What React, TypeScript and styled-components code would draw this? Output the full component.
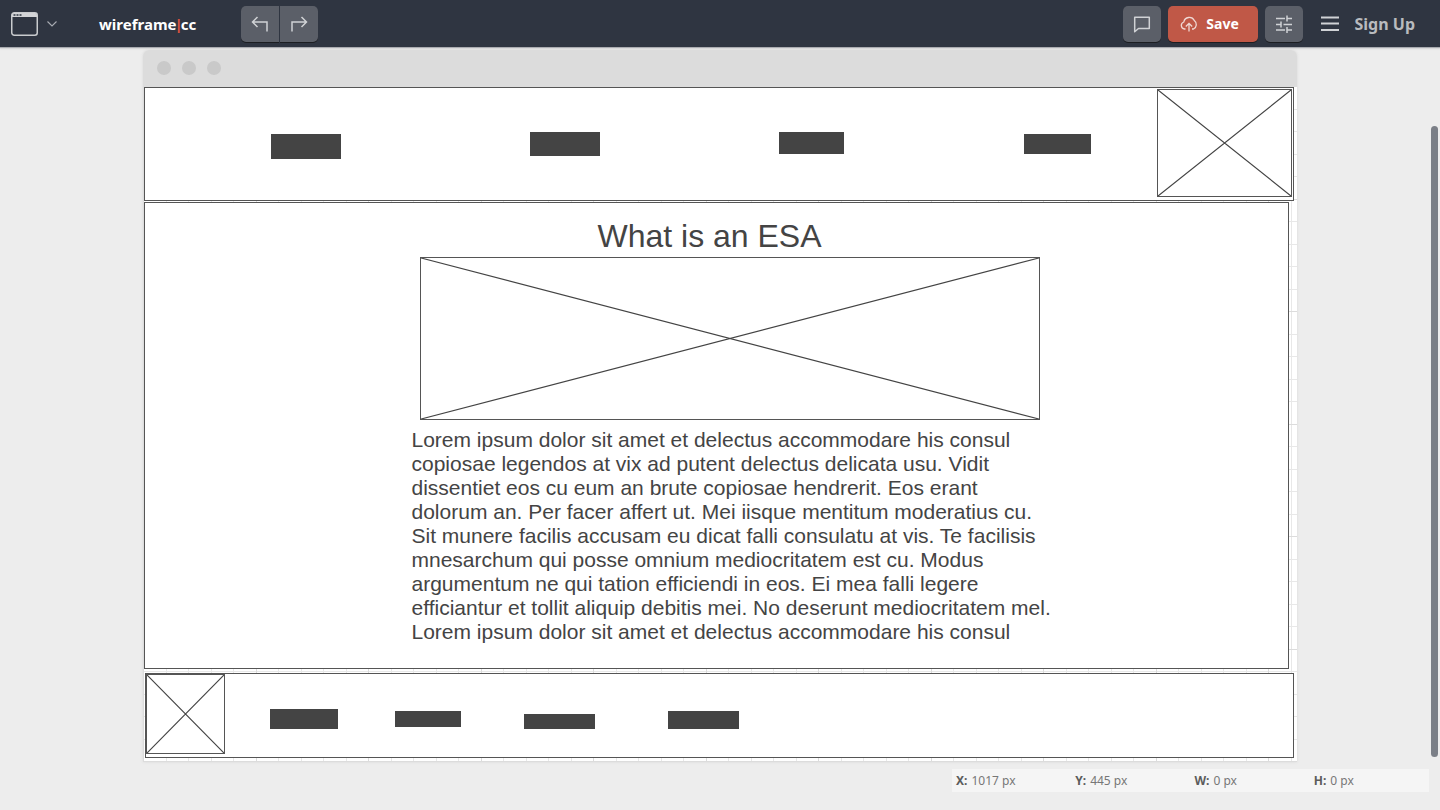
import React from "react";
import styled, { createGlobalStyle } from "styled-components";

const INK = "#444444";
const UI_FONT = '"Noto Sans", "Open Sans", sans-serif';
const DOC_FONT = '"Liberation Sans", Arial, sans-serif';

const GlobalStyle = createGlobalStyle`
  *, *::before, *::after { box-sizing: border-box; }
  body { margin: 0; background: #ededed; font-family: ${UI_FONT}; }
  h1, p { margin: 0; font-weight: 400; }
  button { padding: 0; border: 0; background: none; font: inherit; color: inherit; cursor: pointer; }
  svg { display: block; }
`;

const Page = styled.div`
  display: flex;
  flex-direction: column;
  min-height: 100vh;
`;

const TopBar = styled.header`
  display: flex;
  align-items: center;
  justify-content: space-between;
  height: 47px;
  padding: 0 25px 0 10px;
  background: #2f3541;
  box-shadow: 0 1px 1px #a9abb0, 0 2px 2px #dddddd;
`;

const BarGroup = styled.div`
  display: flex;
  align-items: center;
`;

const DeviceButton = styled.button`
  display: flex;
  align-items: center;
  gap: 8px;
  margin-right: 42px;
`;

const Logo = styled.a`
  margin-right: 45px;
  color: #ffffff;
  font-size: 15px;
  line-height: 24px;
  font-weight: 700;
  text-decoration: none;
`;

const LogoMark = styled.span`
  margin: 0 -2px;
  color: #e0543e;
`;

const History = styled.div`
  display: flex;
  gap: 1px;
`;

const ToolButton = styled.button<{ $side?: "left" | "right" }>`
  display: flex;
  align-items: center;
  justify-content: center;
  width: 38px;
  height: 36px;
  border-radius: ${(p) => (p.$side === "left" ? "5px 0 0 5px" : p.$side === "right" ? "0 5px 5px 0" : "5px")};
  background: #5b5f68;
  box-shadow: 0 1px 0 #1c1e22;
`;

const SaveButton = styled(ToolButton)`
  width: 90px;
  gap: 8px;
  margin: 0 7px;
  padding-right: 6px;
  background: #c05847;
  color: #ffffff;
  font-size: 14px;
  font-weight: 700;
`;

const MenuButton = styled.button`
  margin: 0 16px 0 18px;
`;

const SignUp = styled.a`
  color: #b9bbbe;
  font-size: 16px;
  line-height: 24px;
  font-weight: 700;
  text-decoration: none;
`;

const Workspace = styled.main`
  display: flex;
  flex: 1;
`;

const Stage = styled.div`
  flex: 1;
  min-width: 0;
`;

const Artboard = styled.section`
  margin: 3px 134px 0 143px;
  border-radius: 6px 6px 0 0;
  box-shadow: 0 0 3px #d8d8d8;
`;

const Chrome = styled.div`
  display: flex;
  align-items: center;
  gap: 11px;
  height: 37px;
  padding: 0 14px 1px;
  border-radius: 6px 6px 0 0;
  background: #dcdcdc;
`;

const Dot = styled.span`
  width: 14px;
  height: 14px;
  border-radius: 50%;
  background: #c9c9c9;
`;

const line = (dir: string, at: number, size: number, color: string) =>
  `linear-gradient(${dir}, transparent ${at}px, ${color} ${at}px, ${color} ${at + 1}px, transparent ${at + 1}px) 1px 0 / ${size}px ${size}px`;

const Grid = styled.div`
  padding: 0 3px 4px 1px;
  background:
    ${line("to right", 112, 225, "#dcdcdc")},
    ${line("to right", 224, 225, "#dcdcdc")},
    ${line("to bottom", 112, 225, "#dcdcdc")},
    ${line("to bottom", 224, 225, "#dcdcdc")},
    ${line("to right", 22, 45, "#e8e8e8")},
    ${line("to right", 44, 45, "#e8e8e8")},
    ${line("to bottom", 22, 45, "#e8e8e8")},
    ${line("to bottom", 44, 45, "#e8e8e8")},
    #ffffff;
`;

const Panel = styled.div`
  display: flex;
  border: 1px solid #555555;
  background: #ffffff;
`;

const NavPanel = styled(Panel)`
  height: 114px;
  justify-content: space-between;
  padding: 1px;
`;

const ContentPanel = styled(Panel)`
  flex-direction: column;
  align-items: center;
  height: 467px;
  margin: 1px 5px 4px 0;
  padding: 13px 0 0 26px;
`;

const FooterPanel = styled(Panel)`
  height: 85px;
  margin-left: 1px;
`;

const Blocks = styled.div`
  display: flex;
`;

const Block = styled.span<{ $w: number; $h: number; $before: number; $top: number }>`
  width: ${(p) => p.$w}px;
  height: ${(p) => p.$h}px;
  margin: ${(p) => p.$top}px 0 0 ${(p) => p.$before}px;
  background: ${INK};
`;

const Frame = styled.div<{ $w: number; $h: number }>`
  width: ${(p) => p.$w}px;
  height: ${(p) => p.$h}px;
  border: 1px solid #555555;
  svg { width: 100%; height: 100%; }
`;

const Article = styled.article`
  display: flex;
  flex-direction: column;
  width: 636px;
  color: ${INK};
  font-family: ${DOC_FONT};
`;

const Title = styled.h1`
  padding: 0 40px 1px 0;
  text-align: center;
  font-size: 32px;
  line-height: 40px;
`;

const Picture = styled.div`
  margin: 0 8px 8px;
`;

const Copy = styled.p`
  font-size: 21px;
  line-height: 24px;
  white-space: nowrap;
`;

const CopyLine = styled.span`
  display: block;
`;

const Status = styled.dl`
  display: grid;
  grid-template-columns: repeat(4, 1fr);
  width: 477px;
  height: 23px;
  margin: 7px 2px 0 auto;
  background: #f5f5f5;
  color: #777777;
  font-size: 12px;
  line-height: 23px;
`;

const Reading = styled.div`
  display: flex;
  gap: 4px;
  padding-left: 4px;
  dt { color: #5c5c5c; font-weight: 700; }
  dd { margin: 0; }
`;

const Rail = styled.div`
  width: 9px;
  padding-top: 79px;
`;

const Thumb = styled.div`
  width: 7px;
  height: 631px;
  border-radius: 4px;
  background: #7b7f87;
`;

type BlockSpec = { w: number; h: number; before: number; top: number };

const navBlocks: BlockSpec[] = [
  { w: 70, h: 25, before: 125, top: 45 },
  { w: 70, h: 24, before: 189, top: 43 },
  { w: 65, h: 22, before: 179, top: 43 },
  { w: 67, h: 20, before: 180, top: 45 },
];

const footerBlocks: BlockSpec[] = [
  { w: 68, h: 20, before: 45, top: 35 },
  { w: 66, h: 16, before: 57, top: 37 },
  { w: 71, h: 15, before: 63, top: 40 },
  { w: 71, h: 18, before: 73, top: 37 },
];

const copy = [
  "Lorem ipsum dolor sit amet et delectus accommodare his consul",
  "copiosae legendos at vix ad putent delectus delicata usu. Vidit",
  "dissentiet eos cu eum an brute copiosae hendrerit. Eos erant",
  "dolorum an. Per facer affert ut. Mei iisque mentitum moderatius cu.",
  "Sit munere facilis accusam eu dicat falli consulatu at vis. Te facilisis",
  "mnesarchum qui posse omnium mediocritatem est cu. Modus",
  "argumentum ne qui tation efficiendi in eos. Ei mea falli legere",
  "efficiantur et tollit aliquip debitis mei. No deserunt mediocritatem mel.",
  "Lorem ipsum dolor sit amet et delectus accommodare his consul",
];

const readings = [
  ["X:", "1017 px"],
  ["Y:", "445 px"],
  ["W:", "0 px"],
  ["H:", "0 px"],
];

function BlockRow({ items }: { items: BlockSpec[] }) {
  return (
    <Blocks>
      {items.map((b, i) => (
        <Block key={i} $w={b.w} $h={b.h} $before={b.before} $top={b.top} />
      ))}
    </Blocks>
  );
}

function ImageFrame({ w, h }: { w: number; h: number }) {
  return (
    <Frame $w={w} $h={h}>
      <svg viewBox="0 0 100 100" preserveAspectRatio="none" stroke={INK} strokeWidth="1.2" aria-hidden="true">
        <path d="M0 0L100 100M100 0L0 100" vectorEffect="non-scaling-stroke" />
      </svg>
    </Frame>
  );
}

const stroke = { fill: "none", stroke: "#d0d2d5", strokeWidth: 1.5, "aria-hidden": true } as const;

export default function App() {
  return (
    <Page>
      <GlobalStyle />
      <TopBar>
        <BarGroup>
          <DeviceButton aria-label="Device">
            <svg width="29" height="26" viewBox="0 0 29 26" aria-hidden="true">
              <rect x="1.75" y="1.75" width="25.5" height="22.5" rx="2.5" fill="none" stroke="#c9cbce" strokeWidth="1.5" />
              <path d="M2 4a2 2 0 0 1 2-2h21a2 2 0 0 1 2 2v2H2z" fill="#d3d4d7" />
              <path d="M3.500 4h2M6.500 4h2M9.500 4h2" stroke="#2f3541" strokeWidth="1.6" />
            </svg>
            <svg width="10" height="6" viewBox="0 0 10 6" {...stroke} strokeWidth={1.1} stroke="#a9acb2">
              <path d="M.5.5L5 5L9.500.5" />
            </svg>
          </DeviceButton>
          <Logo href="#">
            wireframe<LogoMark>|</LogoMark>cc
          </Logo>
          <History>
            <ToolButton $side="left" aria-label="Undo">
              <svg width="18" height="16" viewBox="0 0 18 16" {...stroke}>
                <path d="M6.500 1L1.500 6L6.500 11M1.500 6H16V15.500" />
              </svg>
            </ToolButton>
            <ToolButton $side="right" aria-label="Redo">
              <svg width="18" height="16" viewBox="0 0 18 16" {...stroke}>
                <path d="M11.500 1L16.500 6L11.500 11M16.500 6H2V15.500" />
              </svg>
            </ToolButton>
          </History>
        </BarGroup>
        <BarGroup>
          <ToolButton aria-label="Comments">
            <svg width="18" height="18" viewBox="0 0 18 18" {...stroke}>
              <path d="M1.700 2.200H16.300V13.500H5.500L1.700 16.700Z" strokeLinejoin="round" />
            </svg>
          </ToolButton>
          <SaveButton>
            <svg width="18" height="16" viewBox="0 0 18 16" {...stroke} stroke="#f0d9d5" strokeWidth={1.3}>
              <path d="M5.500 13H4.500A3.600 3.600 0 0 1 3.800 6A5.600 5.600 0 0 1 14.300 4.500A5 5 0 0 1 13.500 13H12" />
              <path d="M9 15.500V7.500M5.800 10.500L9 7.300L12.200 10.500" />
            </svg>
            Save
          </SaveButton>
          <ToolButton aria-label="Settings">
            <svg width="18" height="18" viewBox="0 0 18 18" {...stroke}>
              <path d="M1 3.500H10M12 3.500H17M12 .5V6.500M1 9.500H6M8.500 9.500H17M6 6.500V12.500M1 15H10M12 15H17M12 12V18" />
            </svg>
          </ToolButton>
          <MenuButton aria-label="Menu">
            <svg width="18" height="16" viewBox="0 0 18 16" {...stroke} strokeWidth={1.8}>
              <path d="M0 1.500H18M0 7.500H18M0 14H18" />
            </svg>
          </MenuButton>
          <SignUp href="#">Sign Up</SignUp>
        </BarGroup>
      </TopBar>
      <Workspace>
        <Stage>
          <Artboard>
            <Chrome>
              <Dot />
              <Dot />
              <Dot />
            </Chrome>
            <Grid>
              <NavPanel>
                <BlockRow items={navBlocks} />
                <ImageFrame w={135} h={108} />
              </NavPanel>
              <ContentPanel>
                <Article>
                  <Title>What is an ESA</Title>
                  <Picture>
                    <ImageFrame w={620} h={163} />
                  </Picture>
                  <Copy>
                    {copy.map((text, i) => (
                      <CopyLine key={i}>{text}</CopyLine>
                    ))}
                  </Copy>
                </Article>
              </ContentPanel>
              <FooterPanel>
                <ImageFrame w={79} h={80} />
                <BlockRow items={footerBlocks} />
              </FooterPanel>
            </Grid>
          </Artboard>
          <Status>
            {readings.map(([name, value]) => (
              <Reading key={name}>
                <dt>{name}</dt>
                <dd>{value}</dd>
              </Reading>
            ))}
          </Status>
        </Stage>
        <Rail>
          <Thumb />
        </Rail>
      </Workspace>
    </Page>
  );
}
